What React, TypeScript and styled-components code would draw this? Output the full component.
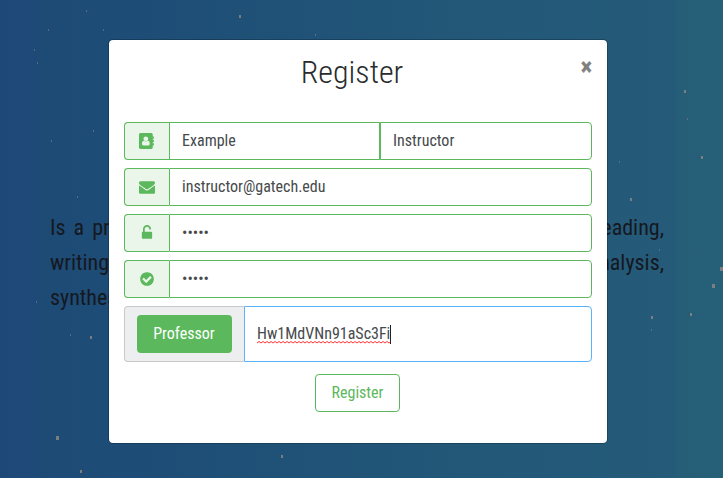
import React from "react";
import styled, { createGlobalStyle } from "styled-components";

const GlobalStyle = createGlobalStyle`
  *, *::before, *::after { box-sizing: border-box; }
  body {
    margin: 0;
    font-family: "Roboto Condensed", Roboto, sans-serif;
    font-stretch: 75%;
    font-size: 16px;
    line-height: 24px;
    color: #464a4c;
  }
`;

const Page = styled.div`
  position: relative;
  width: 723px;
  height: 478px;
  overflow: hidden;
  background: linear-gradient(90deg, #1e4878 0, #1e4978 34px, #1d4b75 40px, #1d4c76 110px, #225778 440px, #255b79 675px, #265e78 680px, #265f78 100%);
`;

const Speck = styled.i<{ $x: number; $y: number; $s: number }>`
  position: absolute;
  left: ${(p) => p.$x}px;
  top: ${(p) => p.$y}px;
  width: ${(p) => p.$s}px;
  height: ${(p) => p.$s + 1}px;
  background: #8c8580;
  opacity: ${(p) => (p.$s === 1 ? 0.55 : 0.85)};
`;

const Intro = styled.div`
  display: flex;
  flex-direction: column;
  padding: 210px 59px 0 50px;
  font-size: 22px;
  line-height: 35px;
  color: #15181f;
`;

const IntroLine = styled.div<{ $gap?: number }>`
  display: flex;
  justify-content: space-between;
  word-spacing: ${(p) => p.$gap ?? 0}px;
`;

const Dialog = styled.div`
  position: absolute;
  left: 108px;
  top: 39px;
  width: 500px;
  height: 405px;
  padding: 15px;
  display: flex;
  flex-direction: column;
  background: #fff;
  background-clip: padding-box;
  border: 1px solid rgba(0, 0, 0, 0.22);
  border-radius: 5px;
`;

const Header = styled.header`
  display: grid;
  grid-template-columns: 8px 1fr 20px;
  height: 67px;
`;

const Title = styled.h2`
  grid-column: 2;
  margin: 0;
  font-size: 32px;
  font-weight: 300;
  line-height: 35px;
  text-align: center;
  color: #292b2c;
`;

const Close = styled.button`
  align-self: start;
  justify-self: end;
  padding: 0;
  border: 0;
  background: none;
  font: 700 24px/24px "Roboto Condensed", Roboto, sans-serif;
  font-stretch: 75%;
  color: #808080;
  -webkit-text-stroke: 0.4px #808080;
`;

const Form = styled.form`
  display: flex;
  flex-direction: column;
  gap: 8px;
`;

const Group = styled.div<{ $tall?: boolean }>`
  display: flex;
  height: ${(p) => (p.$tall ? 56 : 38)}px;
`;

const Addon = styled.div<{ $neutral?: boolean }>`
  display: flex;
  align-items: center;
  justify-content: center;
  width: ${(p) => (p.$neutral ? 120 : 45)}px;
  flex: none;
  border: 1px solid ${(p) => (p.$neutral ? "#c8c9ca" : "#5cb85c")};
  border-right: 0;
  border-radius: 4px 0 0 4px;
  background: ${(p) => (p.$neutral ? "#eceeef" : "#eaf6ea")};
  color: #5cb85c;
`;

const Field = styled.div<{ $focus?: boolean; $first?: boolean }>`
  display: flex;
  align-items: center;
  flex: ${(p) => (p.$first ? "0 0 211px" : "1 1 0")};
  min-width: 0;
  padding: 0 12px;
  border: 1px solid ${(p) => (p.$focus ? "#5cb3fd" : "#5cb85c")};
  border-radius: ${(p) => (p.$first ? "0" : "0 4px 4px 0")};
`;

const Misspelled = styled.span`
  position: relative;
`;

const Squiggle = styled.svg`
  position: absolute;
  left: 0;
  bottom: 2px;
  width: 100%;
  height: 3px;
`;

const Caret = styled.span`
  width: 1px;
  height: 19px;
  background: #222;
`;

const Role = styled.button`
  width: 95px;
  height: 38px;
  padding: 0 1px 1px 0;
  border: 0;
  border-radius: 4px;
  background: #5cb85c;
  color: #fff;
  font: inherit;
  font-stretch: 75%;
`;

const Submit = styled.button`
  align-self: center;
  width: 85px;
  height: 38px;
  margin: 4px 0 0 -1px;
  padding: 0 0 1px;
  border: 1px solid #5cb85c;
  border-radius: 4px;
  background: #fff;
  color: #5cb85c;
  font: inherit;
  font-stretch: 75%;
`;

const icons = {
  contact:
    "M1028 644q0 107-76.500 183t-183.500 76-183.500-76-76.500-183q0-108 76.500-184t183.500-76 183.500 76 76.500 184zM980 864q46 0 82.500 17t60 47.500 39.500 67 24 81 11.500 82.500 3.500 79q0 67-39.500 118.500t-105.500 51.500h-576q-66 0-105.500-51.500t-39.500-118.500q0-48 4.500-93.500t18.500-98.500 36.500-91.500 63-64.500 93.500-26h5q7 4 32 19.500t35.500 21 33 17 37 16 35 9 39.500 4.500 39.500-4.500 35-9 37-16 33-17 35.500-21 32-19.500zM1664 608q0 13-9.500 22.500t-22.500 9.500h-96v128h96q13 0 22.500 9.500t9.500 22.500v192q0 13-9.500 22.500t-22.500 9.500h-96v128h96q13 0 22.500 9.500t9.500 22.500v192q0 13-9.500 22.500t-22.500 9.500h-96v224q0 66-47 113t-113 47h-1216q-66 0-113-47t-47-113v-1472q0-66 47-113t113-47h1216q66 0 113 47t47 113v224h96q13 0 22.500 9.500t9.500 22.500z",
  mail:
    "M1792 710v794q0 66-47 113t-113 47h-1472q-66 0-113-47t-47-113v-794q44 49 101 87 362 246 497 345 57 42 92.500 65.500t94.500 48 110 24.500h2q51 0 110-24.500t94.500-48 92.500-65.500q170-123 498-345 57-39 100-87zM1792 416q0 79-49 151t-122 123q-376 261-468 325-10 7-42.500 31t-54 38.500-52 32.500-57.500 27-50 9h-2q-23 0-50-9t-57.500-27-52-32.500-54-38.500-42.500-31q-91-64-262-182.500t-205-142.500q-62-42-117-115.500t-55-136.500q0-78 41.500-130t118.500-52h1472q65 0 112.500 47t47.500 113z",
  unlock:
    "M1376 768q40 0 68 28t28 68v576q0 40-28 68t-68 28h-960q-40 0-68-28t-28-68v-576q0-40 28-68t68-28h32v-320q0-185 131.500-316.500t316.500-131.500 316.500 131.500 131.500 316.500q0 26-19 45t-45 19h-64q-26 0-45-19t-19-45q0-106-75-181t-181-75-181 75-75 181v320h736z",
  check:
    "M1412 734q0-28-18-46l-91-90q-19-19-45-19t-45 19l-408 407-226-226q-19-19-45-19t-45 19l-91 90q-18 18-18 46 0 27 18 45l362 362q19 19 45 19 27 0 46-19l543-543q18-18 18-45zM1664 896q0 209-103 385.500t-279.500 279.500-385.500 103-385.500-103-279.500-279.500-103-385.500 103-385.500 279.500-279.500 385.500-103 385.500 103 279.500 279.500 103 385.500z",
};

function Icon({ name }: { name: keyof typeof icons }) {
  return (
    <svg width={16} height={16} viewBox="0 0 1792 1792" fill="currentColor">
      <path fillRule="evenodd" d={icons[name]} />
    </svg>
  );
}

const wave = "M0 2" + Array.from({ length: 34 }, () => "l2 -1.5l2 1.5").join("");

const specks: [number, number, number][] = [
  [86, 10, 1], [48, 29, 1], [103, 29, 1], [34, 49, 1], [37, 62, 1], [93, 130, 1],
  [51, 140, 1], [239, 15, 2], [315, 34, 1], [684, 90, 2], [687, 118, 1], [701, 156, 2],
  [77, 196, 1], [79, 230, 1], [36, 301, 1], [619, 161, 1], [630, 198, 2], [659, 249, 1],
  [720, 267, 3], [712, 284, 3], [690, 313, 2], [651, 316, 2], [651, 329, 1],
  [70, 334, 1], [90, 336, 2], [56, 436, 3], [80, 470, 2], [281, 455, 2],
];

export default function App() {
  return (
    <Page>
      <GlobalStyle />
      {specks.map(([x, y, s]) => (
        <Speck key={`${x}-${y}`} $x={x} $y={y} $s={s} />
      ))}
      <Intro>
        <IntroLine $gap={3}><span>Is a pr</span><span>reading,</span></IntroLine>
        <IntroLine><span>writing,</span><span>analysis,</span></IntroLine>
        <IntroLine><span>synthes</span></IntroLine>
      </Intro>
      <Dialog>
        <Header>
          <Title>Register</Title>
          <Close>×</Close>
        </Header>
        <Form>
          <Group>
            <Addon><Icon name="contact" /></Addon>
            <Field $first>Example</Field>
            <Field>Instructor</Field>
          </Group>
          <Group>
            <Addon><Icon name="mail" /></Addon>
            <Field>instructor@gatech.edu</Field>
          </Group>
          <Group>
            <Addon><Icon name="unlock" /></Addon>
            <Field>•••••</Field>
          </Group>
          <Group>
            <Addon><Icon name="check" /></Addon>
            <Field>•••••</Field>
          </Group>
          <Group $tall>
            <Addon $neutral><Role type="button">Professor</Role></Addon>
            <Field $focus>
              <Misspelled>
                Hw1MdVNn91aSc3Fi
                <Squiggle><path d={wave} fill="none" stroke="#f33" strokeWidth="1" /></Squiggle>
              </Misspelled>
              <Caret />
            </Field>
          </Group>
          <Submit type="button">Register</Submit>
        </Form>
      </Dialog>
    </Page>
  );
}
